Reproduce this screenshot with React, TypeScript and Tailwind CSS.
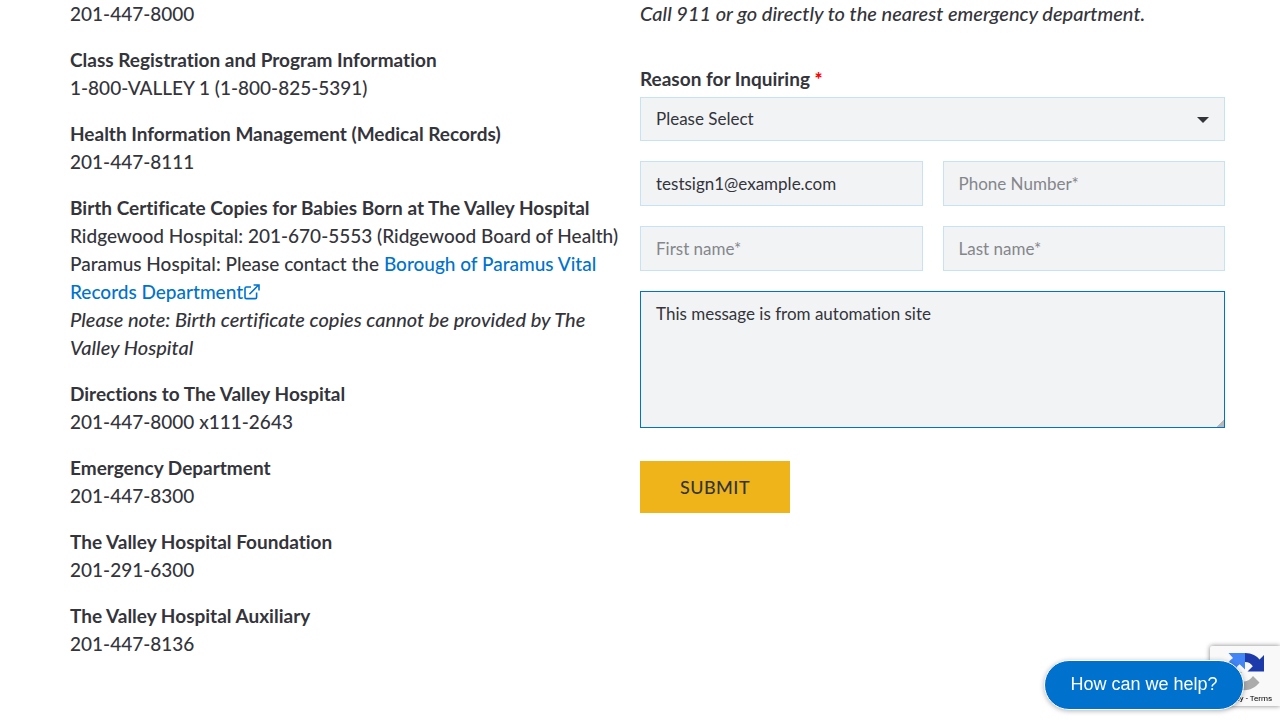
import type { ReactNode } from "react";

const fieldClass =
  "w-full min-w-0 rounded-none border border-[#c7e1f5] bg-[#f1f3f5] px-[15px] text-[17px] font-normal text-[#34343b] outline-none placeholder:text-[#85868a]";

function Contact({ title, children }: { title: string; children: ReactNode }) {
  return (
    <p>
      <strong className="font-bold">{title}</strong>
      <br />
      {children}
    </p>
  );
}

function ExternalIcon() {
  return (
    <svg className="ml-px inline-block h-4 w-4 align-[-1px]" viewBox="0 0 16 16" fill="none" stroke="currentColor" strokeWidth="1.6" aria-hidden="true">
      <path d="M7 3H2.4Q1 3 1 4.4V13.2Q1 14.6 2.4 14.6H11.2Q12.6 14.6 12.6 13.2V8.6" />
      <path d="M5.4 10.2L14.6 1M9.6 1H15V6.4" />
    </svg>
  );
}

function Directory() {
  return (
    <section className="flex flex-col gap-[18px] whitespace-nowrap pl-[15px]">
      <p>201-447-8000</p>
      <Contact title="Class Registration and Program Information">1-800-VALLEY 1 (1-800-825-5391)</Contact>
      <Contact title="Health Information Management (Medical Records)">201-447-8111</Contact>
      <Contact title="Birth Certificate Copies for Babies Born at The Valley Hospital">
        Ridgewood Hospital: 201-670-5553 (Ridgewood Board of Health)
        <br />
        Paramus Hospital: Please contact the{" "}
        <a href="#records" className="text-[#0072ce]">
          Borough of Paramus Vital
          <br />
          Records Department
          <ExternalIcon />
        </a>
        <br />
        <em className="text-xl leading-none">
          Please note: Birth certificate copies cannot be provided by The
          <br />
          Valley Hospital
        </em>
      </Contact>
      <Contact title="Directions to The Valley Hospital">201-447-8000 x111-2643</Contact>
      <Contact title="Emergency Department">201-447-8300</Contact>
      <Contact title="The Valley Hospital Foundation">201-291-6300</Contact>
      <Contact title="The Valley Hospital Auxiliary">201-447-8136</Contact>
    </section>
  );
}

function InquiryForm() {
  return (
    <section>
      <p className="whitespace-nowrap">
        <em className="text-xl leading-none">Call 911 or go directly to the nearest emergency department.</em>
      </p>
      <form className="mt-[37px]" onSubmit={(e) => e.preventDefault()}>
        <label htmlFor="reason" className="block font-bold">
          Reason for Inquiring <span className="font-black text-[#ff0000]">*</span>
        </label>
        <div className="relative mt-1">
          <select id="reason" className={`${fieldClass} block h-11 appearance-none`}>
            <option>Please Select</option>
          </select>
          <svg className="pointer-events-none absolute top-5 right-4 h-1.5 w-3" viewBox="0 0 12 6" aria-hidden="true">
            <path d="M0 0H12L6 6Z" fill="#34343b" />
          </svg>
        </div>
        <div className="mt-5 grid grid-cols-2 gap-5">
          <input aria-label="Email" type="email" defaultValue="testsign1@example.com" className={`${fieldClass} h-[45px]`} />
          <input aria-label="Phone Number" type="tel" placeholder="Phone Number*" className={`${fieldClass} h-[45px]`} />
          <input aria-label="First name" placeholder="First name*" className={`${fieldClass} h-[45px]`} />
          <input aria-label="Last name" placeholder="Last name*" className={`${fieldClass} h-[45px]`} />
        </div>
        <textarea
          aria-label="Message"
          defaultValue="This message is from automation site"
          className="mt-5 block h-[137px] w-full resize-y rounded-none border border-[#0072ce] bg-[#f1f3f5] px-[15px] py-[10px] text-[17px] leading-6 font-normal text-[#34343b] outline-none [&::-webkit-resizer]:bg-[linear-gradient(135deg,transparent_75%,#b8b8b8_75%)]"
        />
        <button type="submit" className="mt-[33px] bg-[#eeb41a] px-10 py-3 text-lg leading-7 tracking-wide">
          SUBMIT
        </button>
      </form>
    </section>
  );
}

function CaptchaBadge() {
  return (
    <aside className="fixed right-0 bottom-[14px] h-[60px] w-[70px] rounded-l-xs bg-[#f9f9f9] shadow-[0_0_5px_#808080]">
      <svg className="mx-auto mt-[6px] h-10 w-10" viewBox="0 0 40 40" aria-hidden="true">
        <path d="M20 1C27 1 32 4 34.5 7.5L39 3V19.500H22.500L27.800 14.200C26 11.500 23.500 10 20 10Z" fill="#1c3aa9" />
        <path d="M20 1V17.500L14.700 12.200C12 14 10.500 16 10.500 20H1C1 14 3.500 9 8 6L3.500 1Z" fill="#4285f4" />
        <path d="M1 20H17L12.200 25C15.500 31 23.500 31 28 24L34.500 30.500C26 41 13 40 6 32L1 37Z" fill="#ababab" />
      </svg>
      <p className="text-center font-['Roboto',sans-serif] text-[8px] leading-[14px] font-normal whitespace-nowrap text-black">Privacy - Terms</p>
    </aside>
  );
}

export default function App() {
  return (
    <div className="min-h-screen bg-white font-['Lato',sans-serif] text-[19px] leading-7 font-medium text-[#34343b] [font-variant-ligatures:none]">
      <main className="mx-auto grid max-w-[1170px] grid-cols-2">
        <Directory />
        <InquiryForm />
      </main>
      <CaptchaBadge />
      <button
        type="button"
        className="fixed right-9 bottom-[10px] h-[50px] w-[200px] rounded-full border border-white bg-[#0072ce] pb-[2px] font-['Liberation_Sans',Arial,sans-serif] text-lg font-normal text-white shadow-[0_1px_5px_rgba(0,0,0,0.3)]"
      >
        How can we help?
      </button>
    </div>
  );
}
